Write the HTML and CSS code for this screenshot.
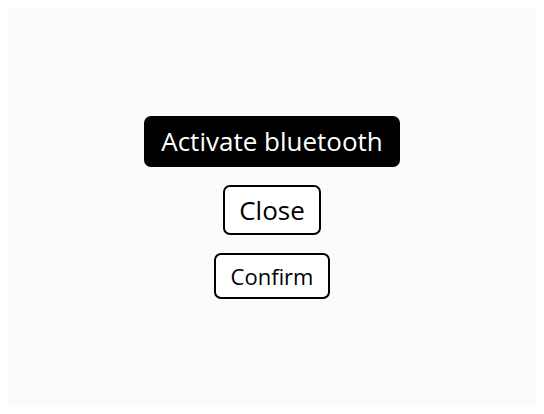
FILE: index.html
```html
<!DOCTYPE html>
<html>
<head>
<meta charset="utf-8">
<link rel="stylesheet" href="styles.css">
</head>
<body>
<div class="panel">
  <button class="btn btn-primary">Activate bluetooth</button>
  <button class="btn btn-outline btn-lg">Close</button>
  <button class="btn btn-outline btn-md">Confirm</button>
</div>
</body>
</html>
```
FILE: styles.css
```css
html, body {
  margin: 0;
  padding: 0;
  background: #ffffff;
}
body {
  padding: 8px;
}
.panel {
  box-sizing: border-box;
  height: 398px;
  background: #f9fcf9;
  display: flex;
  flex-direction: column;
  align-items: center;
  justify-content: center;
  gap: 18px;
  font-family: "Open Sans", sans-serif;
}
.btn {
  font-family: "Open Sans", sans-serif;
  margin: 0;
  cursor: pointer;
  border-radius: 7px;
}
.btn-primary {
  background: #000000;
  color: #ffffff;
  border: 2px solid #000000;
  font-size: 26px;
  line-height: 35px;
  padding: 6px 15px;
}
.btn-outline {
  background: #ffffff;
  color: #000000;
  border: 2px solid #000000;
}
.btn-lg {
  font-size: 26px;
  line-height: 34px;
  padding: 6px 14px;
}
.btn-md {
  font-size: 22px;
  line-height: 30px;
  padding: 6px 15px;
}
```
